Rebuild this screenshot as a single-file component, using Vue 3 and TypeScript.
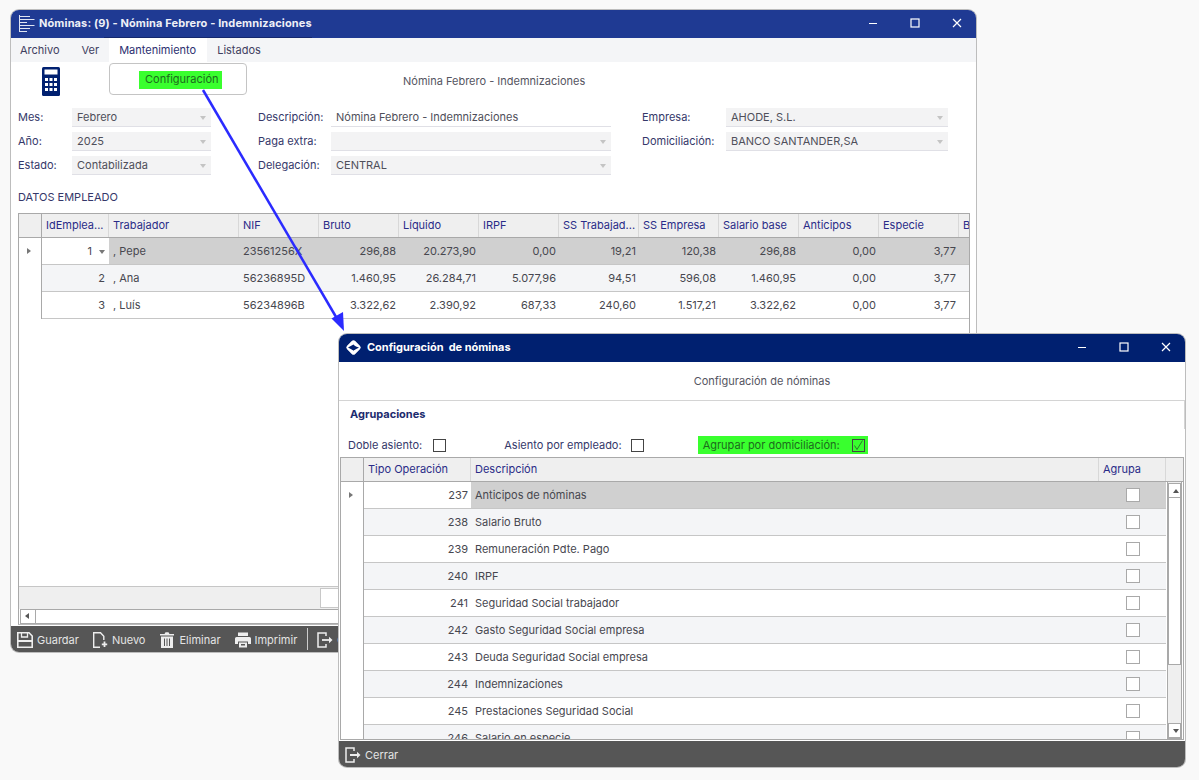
<script setup lang="ts">
const leftFields = [
  { label: 'Mes:', value: 'Febrero' },
  { label: 'Año:', value: '2025' },
  { label: 'Estado:', value: 'Contabilizada' },
]
const midFields = [
  { label: 'Descripción:', value: 'Nómina Febrero - Indemnizaciones', kind: 'text' },
  { label: 'Paga extra:', value: '', kind: 'select' },
  { label: 'Delegación:', value: 'CENTRAL', kind: 'select' },
]
const rightFields = [
  { label: 'Empresa:', value: 'AHODE, S.L.' },
  { label: 'Domiciliación:', value: 'BANCO SANTANDER,SA' },
]
const empHeaders = ['IdEmplea...', 'Trabajador', 'NIF', 'Bruto', 'Líquido', 'IRPF', 'SS Trabajad...', 'SS Empresa', 'Salario base', 'Anticipos', 'Especie', 'B']
const empRows = [
  { id: 1, name: ', Pepe', nif: '23561256X', nums: ['296,88', '20.273,90', '0,00', '19,21', '120,38', '296,88', '0,00', '3,77'] },
  { id: 2, name: ', Ana', nif: '56236895D', nums: ['1.460,95', '26.284,71', '5.077,96', '94,51', '596,08', '1.460,95', '0,00', '3,77'] },
  { id: 3, name: ', Luís', nif: '56234896B', nums: ['3.322,62', '2.390,92', '687,33', '240,60', '1.517,21', '3.322,62', '0,00', '3,77'] },
]
const opRows = [
  { code: 237, text: 'Anticipos de nóminas' },
  { code: 238, text: 'Salario Bruto' },
  { code: 239, text: 'Remuneración Pdte. Pago' },
  { code: 240, text: 'IRPF' },
  { code: 241, text: 'Seguridad Social trabajador' },
  { code: 242, text: 'Gasto Seguridad Social empresa' },
  { code: 243, text: 'Deuda Seguridad Social empresa' },
  { code: 244, text: 'Indemnizaciones' },
  { code: 245, text: 'Prestaciones Seguridad Social' },
  { code: 246, text: 'Salario en especie' },
]
</script>

<template>
  <div class="desk">
    <section class="win win-main">
      <header class="titlebar blue">
        <svg class="app-ico" width="17" height="17" viewBox="0 0 17 17" fill="none" stroke="#dfe4f2" stroke-width="1">
          <path d="M1.500 0V17M1.500 1.500H12M1.500 4.500H16.500M1.500 7.500H9M1.500 10.500H16.500M1.500 13.500H12M1.500 16.500H9" />
        </svg>
        <span class="win-title title-main">Nóminas: (9) - Nómina Febrero - Indemnizaciones</span>
        <span class="title-mark"></span>
        <div class="win-btns">
          <svg width="10" height="10" viewBox="0 0 10 10" stroke="#fff" fill="none"><path d="M1 5.500H9" /></svg>
          <svg width="10" height="10" viewBox="0 0 10 10" stroke="#fff" fill="none" stroke-width="1.200"><rect x="1" y="1" width="8" height="8" /></svg>
          <svg width="10" height="10" viewBox="0 0 10 10" stroke="#fff" fill="none" stroke-width="1.200"><path d="M1 1L9 9M9 1L1 9" /></svg>
        </div>
      </header>
      <nav class="menu">
        <span class="m-item m-archivo">Archivo</span>
        <span class="m-item m-ver">Ver</span>
        <span class="m-item m-active">Mantenimiento</span>
        <span class="m-item">Listados</span>
      </nav>
      <div class="main-body">
        <div class="head-row">
          <svg class="calc" width="18" height="29" viewBox="0 0 18 29">
            <rect width="18" height="29" rx="1.500" fill="#002070" />
            <rect x="2.500" y="2.500" width="13" height="5" fill="#fff" />
            <g fill="#fff">
              <rect x="3" y="11" width="3" height="3" /><rect x="7.500" y="11" width="3" height="3" /><rect x="12" y="11" width="3" height="3" />
              <rect x="3" y="16" width="3" height="3" /><rect x="7.500" y="16" width="3" height="3" /><rect x="12" y="16" width="3" height="3" />
              <rect x="3" y="21" width="3" height="3" /><rect x="7.500" y="21" width="3" height="3" /><rect x="12" y="21" width="3" height="3" />
            </g>
          </svg>
          <div class="cfg-btn"><span class="green cfg-label">Configuración</span></div>
          <div class="head-title">Nómina Febrero - Indemnizaciones</div>
        </div>
        <div class="form">
          <div class="f-col f-left">
            <div v-for="f in leftFields" :key="f.label" class="field">
              <label>{{ f.label }}</label>
              <div class="combo"><span>{{ f.value }}</span><i class="caret"></i></div>
            </div>
          </div>
          <div class="f-col f-mid">
            <div v-for="f in midFields" :key="f.label" class="field">
              <label>{{ f.label }}</label>
              <div class="combo" :class="{ plain: f.kind === 'text' }"><span>{{ f.value }}</span><i v-if="f.kind === 'select'" class="caret"></i></div>
            </div>
          </div>
          <div class="f-col f-right">
            <div v-for="f in rightFields" :key="f.label" class="field">
              <label>{{ f.label }}</label>
              <div class="combo"><span>{{ f.value }}</span><i class="caret"></i></div>
            </div>
          </div>
        </div>
        <div class="section-label">DATOS EMPLEADO</div>
        <div class="grid-emp">
          <div class="emp-main">
            <div class="g-head emp-row">
              <div class="rh"></div>
              <div v-for="h in empHeaders" :key="h" class="hc">{{ h }}</div>
            </div>
            <div v-for="(r, i) in empRows" :key="r.id" class="emp-row data" :class="{ selected: i === 0, alt: i === 1 }">
              <div class="rh body"><i v-if="i === 0" class="tri"></i></div>
              <div class="c num idc" :class="{ cur: i === 0 }">
                <span>{{ r.id }}</span><i v-if="i === 0" class="caret dark"></i>
              </div>
              <div class="c">{{ r.name }}</div>
              <div class="c">{{ r.nif }}</div>
              <div v-for="(n, k) in r.nums" :key="k" class="c num">{{ n }}</div>
              <div class="c"></div>
            </div>
            <div class="emp-foot"><div class="foot-box"></div></div>
          </div>
          <div class="hscroll">
            <div class="sb-btn"><i class="tri left"></i></div>
            <div class="sb-thumb"></div>
          </div>
        </div>
      </div>
      <footer class="actions">
        <div class="act a-save">
          <svg width="16" height="16" viewBox="0 0 16 16" fill="none" stroke="#eee" stroke-width="1.600"><path d="M0.800 0.800H12L15.200 4V15.200H0.800Z" /><path d="M4.500 0.800V5H10.500V0.800" stroke-width="1.300" /><path d="M0.800 9H15.200" stroke-width="1.800" /></svg>
          <span>Guardar</span>
        </div>
        <div class="act a-new">
          <svg width="16" height="16" viewBox="0 0 16 16" fill="none" stroke="#eee" stroke-width="1.400"><path d="M8 15.200H1.700V0.800H8.500L11.800 4.200V8" /><path d="M12.500 9.500V15M9.800 12.300H15.200" stroke-width="1.800" /></svg>
          <span>Nuevo</span>
        </div>
        <div class="act a-del">
          <svg width="14" height="16" viewBox="0 0 14 16"><path fill="#eee" d="M0 2H4.500L5.500 0.300H8.500L9.500 2H14V3.500H0ZM1 4.500H13V16H1Z" /><path stroke="#565656" d="M4.500 6.500V14M7 6.500V14M9.500 6.500V14" /></svg>
          <span>Eliminar</span>
        </div>
        <div class="act a-print">
          <svg width="16" height="16" viewBox="0 0 16 16"><path fill="#eee" d="M3 0.500H13V4H3ZM1.500 5H14.500Q16 5 16 6.500V12H13V9.500H3V12H0V6.500Q0 5 1.500 5ZM4 10.500H12V15.500H4Z" /><path fill="#565656" d="M6 12H10V13.500H6Z" /></svg>
          <span>Imprimir</span>
        </div>
        <div class="sep"></div>
        <div class="act">
          <svg class="exit" width="16" height="16" viewBox="0 0 16 16" fill="none" stroke="#eee" stroke-width="1.500"><path d="M9 4V1H1V15H9V12" /><path d="M5 8H12" stroke-width="1.800" /><path d="M12 4.800L15.500 8L12 11.200Z" fill="#eee" stroke="none" /></svg>
          <span>Cerrar</span>
        </div>
      </footer>
    </section>

    <svg class="arrow" width="1199" height="780" viewBox="0 0 1199 780">
      <path d="M203 90L339 322" stroke="#2b2bff" stroke-width="2.500" fill="none" />
      <path d="M344 331L331.500 318.500L343 312Z" fill="#2b2bff" />
    </svg>

    <section class="win win-cfg">
      <header class="titlebar navy">
        <svg class="logo" width="17" height="17" viewBox="0 0 17 17">
          <rect x="2.700" y="2.700" width="11.600" height="11.600" rx="2.500" transform="rotate(45 8.500 8.500)" fill="#fff" />
          <path d="M3 8.500L8.500 5.500L11.500 8.500L8.500 11.500" fill="#002070" />
          <path d="M8.500 6.800L14 8.500L8.500 11.500L5.500 8.500Z" fill="#002070" />
        </svg>
        <span class="win-title title-cfg">Configuración&nbsp; de nóminas</span>
        <div class="win-btns">
          <svg width="10" height="10" viewBox="0 0 10 10" stroke="#fff" fill="none"><path d="M1 5.500H9" /></svg>
          <svg width="10" height="10" viewBox="0 0 10 10" stroke="#fff" fill="none" stroke-width="1.200"><rect x="1" y="1" width="8" height="8" /></svg>
          <svg width="10" height="10" viewBox="0 0 10 10" stroke="#fff" fill="none" stroke-width="1.200"><path d="M1 1L9 9M9 1L1 9" /></svg>
        </div>
      </header>
      <div class="cfg-head">Configuración de nóminas</div>
      <div class="cfg-group">
        <span class="edge"></span>
        <div class="group-title">Agrupaciones</div>
        <div class="opts">
          <div class="opt o1"><span>Doble asiento:</span><i class="box dark"></i></div>
          <div class="opt o2"><span>Asiento por empleado:</span><i class="box dark"></i></div>
          <div class="opt o3 green">
            <span>Agrupar por domiciliación:</span>
            <i class="box dark">
              <svg width="13" height="13" viewBox="0 0 13 13" fill="none" stroke="#2c7a2c"><path d="M2.500 6.500L5 10.500L10.500 1.500" /></svg>
            </i>
          </div>
        </div>
      </div>
      <div class="grid-op">
        <div class="g-head op-row">
          <div class="rh"></div>
          <div class="hc">Tipo Operación</div>
          <div class="hc">Descripción</div>
          <div class="hc">Agrupa</div>
          <div class="hc last"></div>
        </div>
        <div class="op-body">
          <div class="op-rows">
            <div v-for="(r, i) in opRows" :key="r.code" class="op-row data" :class="{ selected: i === 0, alt: i % 2 === 1 }">
              <div class="rh body"><i v-if="i === 0" class="tri"></i></div>
              <div class="c num" :class="{ cur: i === 0 }">{{ r.code }}</div>
              <div class="c">{{ r.text }}</div>
              <div class="c chk"><i class="box"></i></div>
            </div>
          </div>
          <div class="vscroll">
            <div class="sb-btn v"><i class="tri up"></i></div>
            <div class="sb-thumb v"></div>
            <div class="sb-track"></div>
            <div class="sb-btn v"><i class="tri down"></i></div>
          </div>
        </div>
      </div>
      <footer class="actions cfg-actions">
        <div class="act">
          <svg class="exit" width="16" height="16" viewBox="0 0 16 16" fill="none" stroke="#eee" stroke-width="1.500"><path d="M9 4V1H1V15H9V12" /><path d="M5 8H12" stroke-width="1.800" /><path d="M12 4.800L15.500 8L12 11.200Z" fill="#eee" stroke="none" /></svg>
          <span>Cerrar</span>
        </div>
      </footer>
    </section>
  </div>
</template>

<style>
html, body { margin: 0; background: #f9f9f9; }
</style>

<style scoped>
.desk {
  position: relative;
  width: 1199px;
  height: 780px;
  overflow: hidden;
  background: #f9f9f9;
  font-family: Inter, "Liberation Sans", sans-serif;
  font-size: 11px;
  color: #44444f;
}
.arrow { position: absolute; left: 0; top: 0; pointer-events: none; }
.win {
  position: absolute;
  box-sizing: border-box;
  display: flex;
  flex-direction: column;
  background: #fff;
  border-radius: 8px;
  overflow: hidden;
  box-shadow: 0 0 0 1px #bdbdbd;
}
.win-main { left: 11px; top: 10px; width: 965px; height: 642px; }
.win-cfg { left: 339px; top: 334px; width: 846px; height: 433px; }

.titlebar {
  position: relative;
  flex: none;
  display: flex;
  align-items: center;
  box-sizing: border-box;
  height: 28px;
  padding-bottom: 2px;
  color: #fff;
}
.blue { background: #1f3a93; }
.navy { background: #002070; }
.app-ico { margin-left: 7px; margin-right: 4px; }
.win-title { font-weight: 700; color: #eef0f7; }
.title-main { font-size: 11px; letter-spacing: 0.12px; }
.title-cfg { font-size: 11px; color: #fff; margin-left: 5px; letter-spacing: -0.02px; }
.logo { margin-left: 6px; }
.title-mark {
  position: absolute;
  left: 93px;
  top: 27px;
  width: 208px;
  height: 1px;
  background: #14286e;
}
.win-btns {
  margin-left: auto;
  display: flex;
  gap: 32px;
  margin-right: 14px;
  align-items: center;
}

.menu {
  flex: none;
  display: flex;
  height: 24px;
  background: #f4f5f7;
  color: #3f4060;
  align-items: stretch;
}
.m-item { display: flex; align-items: center; padding: 0 10px; }
.m-archivo { padding: 0 11px 0 9px; }
.m-ver { padding: 0 10px 0 11px; }
.m-active { background: #fff; color: #2c2f70; padding-right: 11px; }

.main-body {
  flex: 1;
  min-height: 0;
  display: flex;
  flex-direction: column;
  padding: 0 7px;
}
.head-row {
  flex: none;
  position: relative;
  display: flex;
  height: 46px;
}
.calc { margin: 5px 0 0 24px; }
.cfg-btn {
  box-sizing: border-box;
  margin: 1px 0 0 49px;
  width: 138px;
  height: 32px;
  border: 1px solid #c4c4c4;
  border-radius: 4px;
  display: flex;
  justify-content: flex-start;
  align-items: flex-start;
  padding: 7px 0 0 29px;
}
.green { background: #39ff2e; color: #1d6b1d; }
.cfg-label {
  padding: 0 4px 0 6px;
  height: 18px;
  line-height: 17px;
}
.head-title { margin: 13px 0 0 156px; line-height: 13px; color: #55555f; }

.form { flex: none; display: flex; height: 66px; }
.f-col { display: flex; flex-direction: column; gap: 6px; }
.f-left { width: 240px; }
.f-mid { width: 384px; }
.field { display: flex; align-items: stretch; height: 18px; }
.field label { display: flex; align-items: center; color: #35386a; }
.f-left label { width: 54px; }
.f-mid label { width: 73px; }
.f-right label { width: 84px; }
.combo {
  position: relative;
  box-sizing: border-box;
  display: flex;
  align-items: center;
  padding: 0 5px;
  height: 19px;
  background: #f3f3f4;
  border-bottom: 1px solid #e0e0e6;
  color: #4f4f5a;
}
.f-left .combo { width: 139px; }
.f-mid .combo { width: 280px; }
.f-right .combo { width: 222px; }
.combo.plain { background: #fff; }
.caret {
  position: absolute;
  right: 5px;
  top: 8px;
  width: 0;
  height: 0;
  border-left: 3.500px solid transparent;
  border-right: 3.500px solid transparent;
  border-top: 4px solid #c4c4c4;
}
.caret.dark { border-top-color: #777; right: 4px; top: 12px; }
.section-label {
  flex: none;
  margin-top: 17px;
  height: 12px;
  line-height: 12px;
  color: #35386a;
}

.grid-emp {
  flex: none;
  box-sizing: border-box;
  margin-top: 10px;
  width: 952px;
  height: 412px;
  border: 1px solid #a9a9a9;
  border-bottom: 1px solid #bbb;
  display: flex;
  flex-direction: column;
  background: #fff;
}
.emp-main { flex: 1; min-height: 0; overflow: hidden; display: flex; flex-direction: column; position: relative; }
.emp-row {
  flex: none;
  display: grid;
  grid-template-columns: 23px 67px 130px 80px 80px 80px 80px 80px 80px 80px 80px 80px 80px;
}
.g-head {
  height: 24px;
  background: #efefef;
  border-bottom: 1px solid #a9a9a9;
  box-sizing: border-box;
  color: #2a2c88;
}
.rh { box-sizing: border-box; border-right: 1px solid #a9a9a9; position: relative; }
.rh.body { background: #fff; }
.hc {
  box-sizing: border-box;
  padding-left: 4px;
  line-height: 22px;
  border-right: 1px solid #d8d8d8;
  white-space: nowrap;
  overflow: hidden;
}
.hc.last { border-right: none; }
.data { height: 27px; }
.c {
  box-sizing: border-box;
  height: 27px;
  padding: 0 4px;
  line-height: 26px;
  border-bottom: 1px solid #c6c6c6;
  white-space: nowrap;
  background: #fff;
  color: #47474f;
  position: relative;
}
.alt .c { background: #f4f5f7; }
.selected .c { background: #d0d0d0; }
.data.selected .c.cur { background: #fff; }
.c.num { text-align: right; padding-right: 3px; padding-left: 0; }
.c.idc { padding-right: 4px; }
.selected .c.idc { padding-right: 17px; }
.tri {
  position: absolute;
  left: 8px;
  top: 10px;
  width: 0;
  height: 0;
  border-top: 3.500px solid transparent;
  border-bottom: 3.500px solid transparent;
  border-left: 4px solid #777;
}
.tri.left { left: 4px; top: 3px; border-left: none; border-right: 4px solid #555; }
.tri.up { left: 4px; top: 5px; border: 3.500px solid transparent; border-top: none; border-bottom: 4px solid #555; }
.tri.down { left: 4px; top: 5px; border: 3.500px solid transparent; border-bottom: none; border-top: 4px solid #555; }
.emp-foot {
  margin-top: auto;
  height: 23px;
  box-sizing: border-box;
  background: #efefef;
  border-top: 1px solid #c6c6c6;
  padding: 1px 0 0 301px;
}
.foot-box { width: 60px; height: 18px; background: #fff; border: 1px solid #c8c8c8; }
.hscroll {
  flex: none;
  box-sizing: border-box;
  display: flex;
  height: 15px;
  border: 1px solid #a9a9a9;
  margin: 0 1px 0 1px;
  background: #fff;
}
.sb-btn { position: relative; box-sizing: border-box; flex: none; background: #fff; width: 15px; border-right: 1px solid #a9a9a9; }
.sb-thumb { flex: 1; background: #fff; }

.cfg-head {
  flex: none;
  height: 39px;
  box-sizing: border-box;
  border-bottom: 1px solid #d4d4d4;
  text-align: center;
  line-height: 38px;
  color: #55555f;
}
.cfg-group { flex: none; position: relative; height: 56px; }
.edge { position: absolute; right: 0; top: 0; width: 1px; height: 28px; background: #d4d4d4; }
.group-title {
  font-weight: 700;
  color: #1c2b6e;
  margin-left: 11px;
  padding-top: 7px;
  line-height: 13px;
}
.opts { display: flex; margin-top: 15px; height: 18px; position: relative; }
.opt { display: flex; align-items: center; gap: 11px; color: #35386a; height: 18px; white-space: nowrap; }
.o1 { margin-left: 9px; }
.o2 { margin-left: 58px; gap: 9px; }
.o3 { margin-left: 54px; padding: 0 3px 0 5px; width: 170px; box-sizing: border-box; justify-content: space-between; color: #1d6b1d; }
.box {
  position: relative;
  display: block;
  flex: none;
  box-sizing: border-box;
  width: 14px;
  height: 14px;
  border: 1px solid #a9a9a9;
  background: #fff;
}
.box.dark { border-color: #444; width: 13px; height: 13px; background: transparent; }
.box.dark svg { position: absolute; left: -1px; top: -1px; }

.grid-op {
  flex: 1;
  min-height: 0;
  box-sizing: border-box;
  margin: 0 1px;
  border: 1px solid #a9a9a9;
  display: flex;
  flex-direction: column;
  overflow: hidden;
}
.op-row {
  display: grid;
  grid-template-columns: 23px 107px 628px 67px 17px;
}
.op-row.data { grid-template-columns: 23px 107px 628px 67px; }
.op-body { flex: 1; min-height: 0; display: flex; position: relative; }
.op-rows { flex: none; width: 825px; overflow: hidden; }
.chk { display: flex; align-items: center; padding-left: 27px; }
.vscroll {
  flex: 1;
  box-sizing: border-box;
  display: flex;
  flex-direction: column;
  background: #efefef;
  border: 1px solid #a9a9a9;
  border-top: none;
  padding: 1px 0 0;
  margin-left: 1px;
  margin-right: 1px;
}
.sb-btn.v { width: 100%; height: 15px; border: 1px solid #a9a9a9; }
.sb-thumb.v { flex: none; height: 166px; border: 1px solid #a9a9a9; border-top: none; }
.sb-track { flex: 1; }

.actions {
  flex: none;
  display: flex;
  align-items: center;
  box-sizing: border-box;
  height: 26px;
  padding: 2px 0 0 6px;
  background: #565656;
  color: #e4e4e4;
}
.cfg-actions { margin-top: 1px; }
.act { display: flex; align-items: center; gap: 4px; white-space: nowrap; }
.a-save { margin-right: 13px; }
.a-new { margin-right: 15px; }
.a-del { gap: 5px; margin-right: 14px; }
.a-print { margin-right: 10px; }
.sep { width: 1px; height: 22px; background: #ccc; margin: -2px 9px 0 0; }
</style>
